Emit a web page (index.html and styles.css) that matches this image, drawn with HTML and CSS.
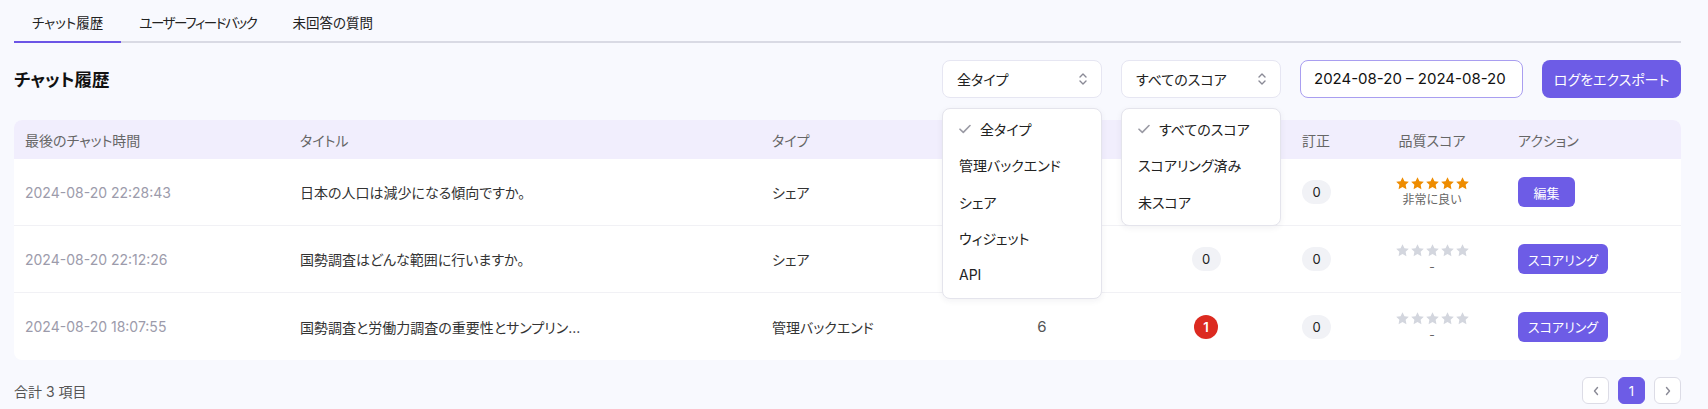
FILE: index.html
```html
<!DOCTYPE html>
<html lang="ja">
<head>
<meta charset="utf-8">
<title>チャット履歴</title>
<link rel="stylesheet" href="styles.css">
</head>
<body>
<div class="page">
  <nav class="tabs">
    <div class="tab active">チャット履歴</div>
    <div class="tab tab-compact">ユーザーフィードバック</div>
    <div class="tab">未回答の質問</div>
  </nav>

  <div class="toolbar">
    <h1 class="heading">チャット履歴</h1>
    <div class="controls">
      <div class="select-wrap">
        <div class="select">
          <span>全タイプ</span>
          <svg class="updown" width="10" height="14" viewBox="0 0 10 14"><path d="M2 5l3-3 3 3M2 9l3 3 3-3" fill="none" stroke="#8a8a96" stroke-width="1.4" stroke-linecap="round" stroke-linejoin="round"/></svg>
        </div>
        <ul class="menu">
          <li class="item checked"><svg class="check" width="12" height="10" viewBox="0 0 12 10"><path d="M1 5.2l3.3 3.2L11 1.5" fill="none" stroke="#9a9aa4" stroke-width="1.6" stroke-linecap="round" stroke-linejoin="round"/></svg>全タイプ</li>
          <li class="item">管理バックエンド</li>
          <li class="item">シェア</li>
          <li class="item">ウィジェット</li>
          <li class="item">API</li>
        </ul>
      </div>
      <div class="select-wrap">
        <div class="select">
          <span>すべてのスコア</span>
          <svg class="updown" width="10" height="14" viewBox="0 0 10 14"><path d="M2 5l3-3 3 3M2 9l3 3 3-3" fill="none" stroke="#8a8a96" stroke-width="1.4" stroke-linecap="round" stroke-linejoin="round"/></svg>
        </div>
        <ul class="menu">
          <li class="item checked"><svg class="check" width="12" height="10" viewBox="0 0 12 10"><path d="M1 5.2l3.3 3.2L11 1.5" fill="none" stroke="#9a9aa4" stroke-width="1.6" stroke-linecap="round" stroke-linejoin="round"/></svg>すべてのスコア</li>
          <li class="item">スコアリング済み</li>
          <li class="item">未スコア</li>
        </ul>
      </div>
      <div class="date-range">2024-08-20 – 2024-08-20</div>
      <button class="export">ログをエクスポート</button>
    </div>
  </div>

  <div class="table-card">
    <table class="grid">
      <colgroup>
        <col class="c-time"><col class="c-title"><col class="c-type"><col class="c-msg"><col class="c-fb"><col class="c-fix"><col class="c-score"><col class="c-act">
      </colgroup>
      <thead>
        <tr>
          <th>最後のチャット時間</th>
          <th>タイトル</th>
          <th>タイプ</th>
          <th class="center" aria-label="メッセージ数"></th>
          <th class="center" aria-label="ユーザー評価"></th>
          <th>訂正</th>
          <th class="center">品質スコア</th>
          <th>アクション</th>
        </tr>
      </thead>
      <tbody>
        <tr>
          <td class="time">2024-08-20 22:28:43</td>
          <td class="title">日本の人口は減少になる傾向ですか。</td>
          <td>シェア</td>
          <td class="center num"></td>
          <td class="center"></td>
          <td><span class="pill">0</span></td>
          <td class="center">
            <div class="stars on">
              <svg viewBox="0 0 24 24"><path d="M12 1.8l3.1 6.5 7 .9-5.1 4.9 1.3 7L12 17.7l-6.3 3.4 1.3-7L1.9 9.2l7-.9z"/></svg><svg viewBox="0 0 24 24"><path d="M12 1.8l3.1 6.5 7 .9-5.1 4.9 1.3 7L12 17.7l-6.3 3.4 1.3-7L1.9 9.2l7-.9z"/></svg><svg viewBox="0 0 24 24"><path d="M12 1.8l3.1 6.5 7 .9-5.1 4.9 1.3 7L12 17.7l-6.3 3.4 1.3-7L1.9 9.2l7-.9z"/></svg><svg viewBox="0 0 24 24"><path d="M12 1.8l3.1 6.5 7 .9-5.1 4.9 1.3 7L12 17.7l-6.3 3.4 1.3-7L1.9 9.2l7-.9z"/></svg><svg viewBox="0 0 24 24"><path d="M12 1.8l3.1 6.5 7 .9-5.1 4.9 1.3 7L12 17.7l-6.3 3.4 1.3-7L1.9 9.2l7-.9z"/></svg>
            </div>
            <div class="score-label">非常に良い</div>
          </td>
          <td><button class="act">編集</button></td>
        </tr>
        <tr>
          <td class="time">2024-08-20 22:12:26</td>
          <td class="title">国勢調査はどんな範囲に行いますか。</td>
          <td>シェア</td>
          <td class="center num"></td>
          <td class="center"><span class="pill">0</span></td>
          <td><span class="pill">0</span></td>
          <td class="center">
            <div class="stars">
              <svg viewBox="0 0 24 24"><path d="M12 1.8l3.1 6.5 7 .9-5.1 4.9 1.3 7L12 17.7l-6.3 3.4 1.3-7L1.9 9.2l7-.9z"/></svg><svg viewBox="0 0 24 24"><path d="M12 1.8l3.1 6.5 7 .9-5.1 4.9 1.3 7L12 17.7l-6.3 3.4 1.3-7L1.9 9.2l7-.9z"/></svg><svg viewBox="0 0 24 24"><path d="M12 1.8l3.1 6.5 7 .9-5.1 4.9 1.3 7L12 17.7l-6.3 3.4 1.3-7L1.9 9.2l7-.9z"/></svg><svg viewBox="0 0 24 24"><path d="M12 1.8l3.1 6.5 7 .9-5.1 4.9 1.3 7L12 17.7l-6.3 3.4 1.3-7L1.9 9.2l7-.9z"/></svg><svg viewBox="0 0 24 24"><path d="M12 1.8l3.1 6.5 7 .9-5.1 4.9 1.3 7L12 17.7l-6.3 3.4 1.3-7L1.9 9.2l7-.9z"/></svg>
            </div>
            <div class="score-label">-</div>
          </td>
          <td><button class="act">スコアリング</button></td>
        </tr>
        <tr>
          <td class="time">2024-08-20 18:07:55</td>
          <td class="title">国勢調査と労働力調査の重要性とサンプリン...</td>
          <td>管理バックエンド</td>
          <td class="center num">6</td>
          <td class="center"><span class="dot">1</span></td>
          <td><span class="pill">0</span></td>
          <td class="center">
            <div class="stars">
              <svg viewBox="0 0 24 24"><path d="M12 1.8l3.1 6.5 7 .9-5.1 4.9 1.3 7L12 17.7l-6.3 3.4 1.3-7L1.9 9.2l7-.9z"/></svg><svg viewBox="0 0 24 24"><path d="M12 1.8l3.1 6.5 7 .9-5.1 4.9 1.3 7L12 17.7l-6.3 3.4 1.3-7L1.9 9.2l7-.9z"/></svg><svg viewBox="0 0 24 24"><path d="M12 1.8l3.1 6.5 7 .9-5.1 4.9 1.3 7L12 17.7l-6.3 3.4 1.3-7L1.9 9.2l7-.9z"/></svg><svg viewBox="0 0 24 24"><path d="M12 1.8l3.1 6.5 7 .9-5.1 4.9 1.3 7L12 17.7l-6.3 3.4 1.3-7L1.9 9.2l7-.9z"/></svg><svg viewBox="0 0 24 24"><path d="M12 1.8l3.1 6.5 7 .9-5.1 4.9 1.3 7L12 17.7l-6.3 3.4 1.3-7L1.9 9.2l7-.9z"/></svg>
            </div>
            <div class="score-label">-</div>
          </td>
          <td><button class="act">スコアリング</button></td>
        </tr>
      </tbody>
    </table>
  </div>

  <div class="footer">
    <div class="total">合計 3 項目</div>
    <div class="pager">
      <button class="pg"><svg width="8" height="10" viewBox="0 0 8 10"><path d="M5.5 1.5L2.5 5l3 3.5" fill="none" stroke="#8a8a96" stroke-width="1.4" stroke-linecap="round" stroke-linejoin="round"/></svg></button>
      <button class="pg current">1</button>
      <button class="pg"><svg width="8" height="10" viewBox="0 0 8 10"><path d="M2.5 1.5L5.5 5l-3 3.5" fill="none" stroke="#8a8a96" stroke-width="1.4" stroke-linecap="round" stroke-linejoin="round"/></svg></button>
    </div>
  </div>
</div>
</body>
</html>
```

FILE: styles.css
```css
* { box-sizing: border-box; }

html, body {
  margin: 0;
  background: #f8f9fe;
}

body {
  font-family: "Inter", "Noto Sans CJK JP", sans-serif;
  font-feature-settings: "palt";
  color: #222;
  font-size: 14px;
}

.page {
  padding: 0 27px 0 14px;
}

/* tabs */
.tabs {
  display: flex;
  border-bottom: 2px solid #d9dae4;
}
.tab {
  padding: 13px 18px 8px;
  font-size: 13.5px;
  line-height: 20px;
  color: #222;
  border-bottom: 2px solid transparent;
  margin-bottom: -2px;
}
.tab.active {
  border-bottom-color: #6c55e6;
}
.tab-compact {
  letter-spacing: -1.4px;
}

/* toolbar */
.toolbar {
  margin-top: 16px;
  height: 39px;
  display: flex;
  align-items: center;
  justify-content: space-between;
}
.heading {
  margin: 0;
  font-size: 17.5px;
  font-weight: 700;
  color: #111;
}
.controls {
  display: flex;
  align-items: center;
  gap: 19px;
}
.select-wrap {
  position: relative;
  width: 160px;
}
.select {
  height: 38px;
  background: #fff;
  border: 1px solid #e6e6f2;
  border-radius: 8px;
  display: flex;
  align-items: center;
  justify-content: space-between;
  padding: 0 13px 0 14px;
  font-size: 14px;
  color: #222;
}
.menu {
  position: absolute;
  top: calc(100% + 10px);
  left: 0;
  width: 100%;
  margin: 0;
  padding: 2px 0 5px;
  list-style: none;
  background: #fff;
  border: 1px solid #e4e4ec;
  border-radius: 8px;
  box-shadow: 0 2px 6px rgba(30, 30, 60, 0.06);
  z-index: 10;
}
.item {
  height: 36.5px;
  display: flex;
  align-items: center;
  padding-left: 16px;
  font-size: 14px;
  color: #222;
}
.check {
  margin-right: 9px;
}
.date-range {
  width: 223px;
  height: 38px;
  background: #fff;
  border: 1.5px solid #a99ef0;
  border-radius: 8px;
  display: flex;
  align-items: center;
  padding-left: 13px;
  font-size: 15px;
  color: #111;
  white-space: nowrap;
}
.export {
  width: 139px;
  height: 38px;
  border: none;
  border-radius: 8px;
  background: #6d5ce6;
  color: #fff;
  font: inherit;
  font-size: 14px;
}

/* table */
.table-card {
  margin-top: 22px;
  background: #fff;
  border-radius: 8px;
  overflow: hidden;
}
.grid {
  width: 100%;
  border-collapse: separate;
  border-spacing: 0;
  table-layout: fixed;
}
.c-time { width: 275px; }
.c-title { width: 472px; }
.c-type { width: 202px; }
.c-msg { width: 158px; }
.c-fb { width: 170px; }
.c-fix { width: 66px; }
.c-score { width: 150px; }
.c-act { width: 174px; }

.grid th {
  height: 39px;
  background: #f1eefd;
  padding: 0 11px;
  text-align: left;
  font-weight: 400;
  font-size: 14px;
  color: #666;
  white-space: nowrap;
  overflow: hidden;
}
.grid td {
  height: 67px;
  padding: 0 11px;
  font-size: 14px;
  color: #333;
  border-bottom: 1px solid #f1f1f5;
  white-space: nowrap;
}
.grid tbody tr:last-child td {
  border-bottom: none;
}
.grid .center { text-align: center; }
.grid td.time { color: #9c9bab; }
.grid td.num { font-size: 15px; color: #555; }

.pill {
  display: inline-flex;
  align-items: center;
  justify-content: center;
  width: 29px;
  height: 24px;
  border-radius: 12px;
  background: #f1f2f6;
  font-size: 13px;
  color: #222;
}
.dot {
  display: inline-flex;
  align-items: center;
  justify-content: center;
  width: 24px;
  height: 24px;
  border-radius: 50%;
  background: #dc2a20;
  color: #fff;
  font-size: 13px;
  font-weight: 600;
}

.stars {
  display: flex;
  justify-content: center;
  gap: 0;
  height: 15px;
}
.stars svg {
  width: 15px;
  height: 15px;
  fill: #d3d6de;
}
.stars.on svg {
  fill: #ee8c00;
}
.score-label {
  font-size: 12px;
  line-height: 17px;
  color: #666;
}

.act {
  height: 30px;
  min-width: 57px;
  padding: 0 10px;
  border: none;
  border-radius: 6px;
  background: #6d5ce6;
  color: #fff;
  font: inherit;
  font-size: 13px;
}

/* footer */
.footer {
  margin-top: 17px;
  height: 27px;
  display: flex;
  align-items: center;
  justify-content: space-between;
}
.total {
  font-size: 14px;
  color: #555;
}
.pager {
  display: flex;
  gap: 9px;
}
.pg {
  width: 27px;
  height: 27px;
  padding: 0;
  border: 1px solid #dcdce6;
  border-radius: 6px;
  background: #fff;
  display: flex;
  align-items: center;
  justify-content: center;
  font: inherit;
  font-size: 13px;
}
.pg.current {
  background: #6d5ce6;
  border-color: #6d5ce6;
  color: #fff;
}
```
